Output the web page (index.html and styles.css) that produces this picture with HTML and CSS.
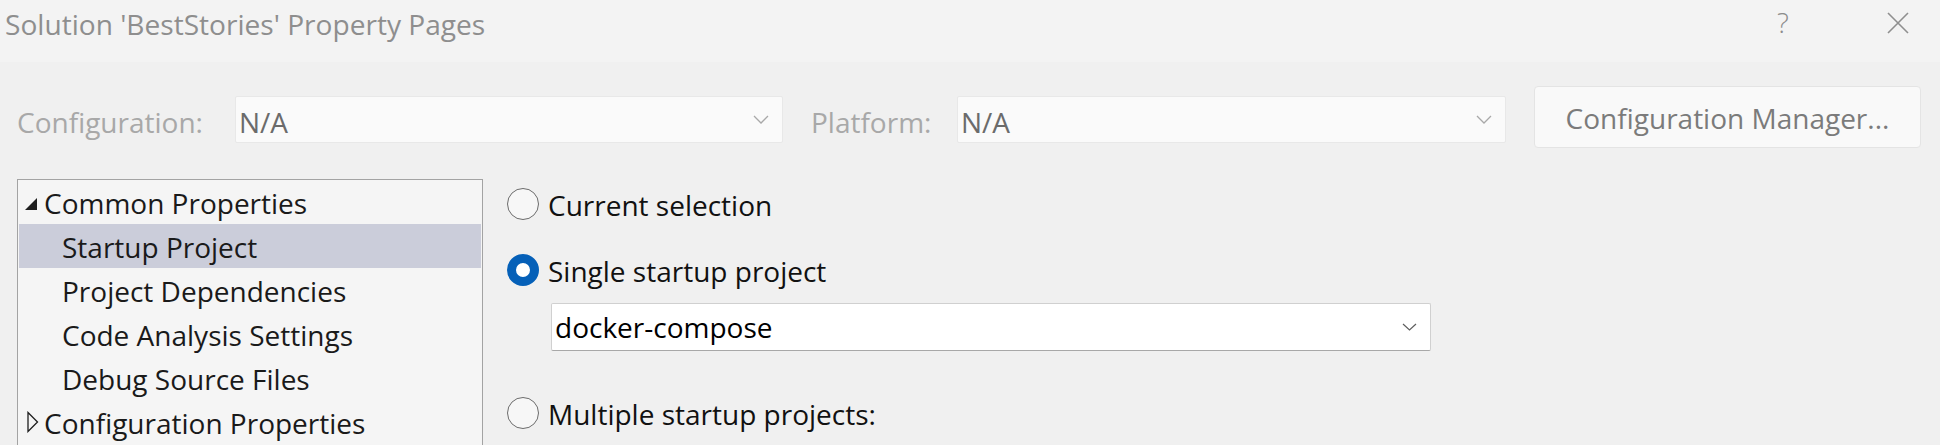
FILE: index.html
```html
<!DOCTYPE html>
<html lang="en">
<head>
<meta charset="utf-8">
<title>Solution 'BestStories' Property Pages</title>
<link rel="stylesheet" href="styles.css">
</head>
<body>
<div class="dialog">
  <header class="titlebar">
    <div class="title">Solution 'BestStories' Property Pages</div>
    <div class="help">?</div>
    <svg class="close" width="22" height="22" viewBox="0 0 22 22" aria-label="Close">
      <path d="M1 1 L21 21 M21 1 L1 21" stroke="#8f8f8f" stroke-width="1.6" fill="none"/>
    </svg>
  </header>

  <div class="config-row">
    <div class="label label-config">Configuration:</div>
    <div class="combo combo-disabled combo-config">
      <span class="combo-text">N/A</span>
      <svg class="chev" width="16" height="9" viewBox="0 0 16 9"><path d="M1 1 L8 8 L15 1" stroke="#a8a8a8" stroke-width="1.3" fill="none"/></svg>
    </div>
    <div class="label label-platform">Platform:</div>
    <div class="combo combo-disabled combo-platform">
      <span class="combo-text">N/A</span>
      <svg class="chev" width="16" height="9" viewBox="0 0 16 9"><path d="M1 1 L8 8 L15 1" stroke="#a8a8a8" stroke-width="1.3" fill="none"/></svg>
    </div>
    <div class="button">Configuration Manager...</div>
  </div>

  <div class="main">
    <div class="tree">
      <div class="row row-parent">
        <svg class="twisty" width="14" height="14" viewBox="0 0 14 14"><path d="M13 1 L13 13 L1 13 Z" fill="#1e1e1e"/></svg>
        <span>Common Properties</span>
      </div>
      <div class="row row-child row-selected"><span>Startup Project</span></div>
      <div class="row row-child"><span>Project Dependencies</span></div>
      <div class="row row-child"><span>Code Analysis Settings</span></div>
      <div class="row row-child"><span>Debug Source Files</span></div>
      <div class="row row-parent">
        <svg class="twisty twisty-closed" width="14" height="22" viewBox="0 0 14 22"><path d="M3 1.5 L12.5 11 L3 20.5 Z" fill="none" stroke="#1e1e1e" stroke-width="1.3"/></svg>
        <span>Configuration Properties</span>
      </div>
    </div>

    <div class="options">
      <div class="radio-row radio-first">
        <span class="radio"></span>
        <span class="radio-label">Current selection</span>
      </div>
      <div class="radio-row radio-second">
        <span class="radio radio-checked"></span>
        <span class="radio-label">Single startup project</span>
      </div>
      <div class="combo combo-project">
        <span class="combo-text">docker-compose</span>
        <svg class="chev" width="15" height="8" viewBox="0 0 15 8"><path d="M1 1 L7.5 7 L14 1" stroke="#5f5f5f" stroke-width="1.2" fill="none"/></svg>
      </div>
      <div class="radio-row radio-third">
        <span class="radio"></span>
        <span class="radio-label">Multiple startup projects:</span>
      </div>
    </div>
  </div>
</div>
</body>
</html>
```

FILE: styles.css
```css
html, body {
  margin: 0;
  padding: 0;
  background: #f0f0f0;
  overflow: hidden;
}

body {
  font-family: "Open Sans", "Noto Sans", "DejaVu Sans", sans-serif;
  font-size: 28px;
  color: #1a1a1a;
  width: 1940px;
  height: 445px;
}

.dialog {
  width: 1940px;
  height: 445px;
  overflow: hidden;
}

/* ---------- title bar ---------- */
.titlebar {
  height: 62px;
  background: #f3f3f3;
  display: flex;
  align-items: flex-start;
}

.title {
  margin-left: 5px;
  margin-top: 10px;
  font-size: 28.1px;
  line-height: 28px;
  font-weight: 400;
  color: #8e8e8e;
  margin-right: auto;
}

.help {
  margin-top: 8px;
  font-size: 28px;
  line-height: 28px;
  font-weight: 300;
  color: #8c8c8c;
  width: 14px;
}

.close {
  margin-top: 12px;
  margin-left: 96px;
  margin-right: 31px;
  width: 22px;
  height: 22px;
}

/* ---------- configuration row ---------- */
.config-row {
  display: flex;
  align-items: flex-start;
  margin-top: 24px;
  padding-left: 17px;
}

.label {
  margin-top: 10px;
  line-height: 53px;
  color: #a8a8a8;
  font-weight: 400;
  white-space: nowrap;
}

.label-config { width: 218px; }
.label-platform { width: 146px; margin-left: 28px; }

.combo {
  box-sizing: border-box;
  display: flex;
  align-items: flex-start;
  justify-content: space-between;
  overflow: hidden;
}

.combo-disabled {
  margin-top: 10px;
  height: 47px;
  background: #fafafa;
  border: 1px solid #e8e8e8;
  border-radius: 2px;
  padding: 4px 13px 0 3px;
  line-height: 42px;
  color: #6b6b6b;
}

.combo-disabled .chev { margin-top: 14px; }

.combo-config { width: 548px; }
.combo-platform { width: 549px; }

.button {
  box-sizing: border-box;
  margin-left: 28px;
  width: 387px;
  height: 62px;
  background: #f9f9f9;
  border: 1px solid #e4e4e4;
  border-radius: 4px;
  text-align: center;
  padding-top: 9px;
  line-height: 44px;
  color: #7b7b7b;
  white-space: nowrap;
}

/* ---------- main area ---------- */
.main {
  display: flex;
  align-items: flex-start;
  margin-top: 30px;
}

.tree {
  box-sizing: border-box;
  margin-left: 17px;
  width: 466px;
  height: 300px;
  border: 1px solid #a3a3a3;
  background: #f5f5f5;
  padding: 0 1px;
}

.row {
  box-sizing: border-box;
  height: 44px;
  padding-top: 2px;
  line-height: 42px;
  display: flex;
  align-items: flex-start;
  white-space: nowrap;
  color: #1a1a1a;
}

.row-parent { padding-left: 0; }
.row-child { padding-left: 43px; }

.row-selected { background: #cbcdda; }

.twisty {
  margin-left: 5px;
  margin-right: 6px;
  margin-top: 15px;
  flex: none;
}

.twisty-closed {
  margin-left: 6px;
  margin-right: 5px;
  margin-top: 9px;
}

/* ---------- options ---------- */
.options {
  margin-left: 24px;
  display: flex;
  flex-direction: column;
  align-items: flex-start;
}

.radio-row {
  display: flex;
  align-items: center;
  height: 40px;
  line-height: 40px;
  white-space: nowrap;
  color: #111;
}

.radio-first { margin-top: 5px; }
.radio-second { margin-top: 26px; }
.radio-third { margin-top: 42px; }

.radio {
  box-sizing: border-box;
  width: 32px;
  height: 32px;
  border-radius: 50%;
  border: 1.5px solid #6c6c6c;
  background: #f7f7f7;
  margin-right: 9px;
  flex: none;
}

.radio-checked {
  border: 9.5px solid #0560b8;
  background: #ffffff;
}

.radio-label {
  margin-top: 1px;
}

.combo-project {
  margin-top: 13px;
  margin-left: 44px;
  width: 880px;
  height: 48px;
  background: #ffffff;
  border: 1px solid #d0d0d0;
  border-bottom-color: #a8a8a8;
  border-radius: 2px;
  padding: 2px 13px 0 3px;
  line-height: 42px;
  color: #000;
}

.combo-project .chev { margin-top: 17px; }
```
